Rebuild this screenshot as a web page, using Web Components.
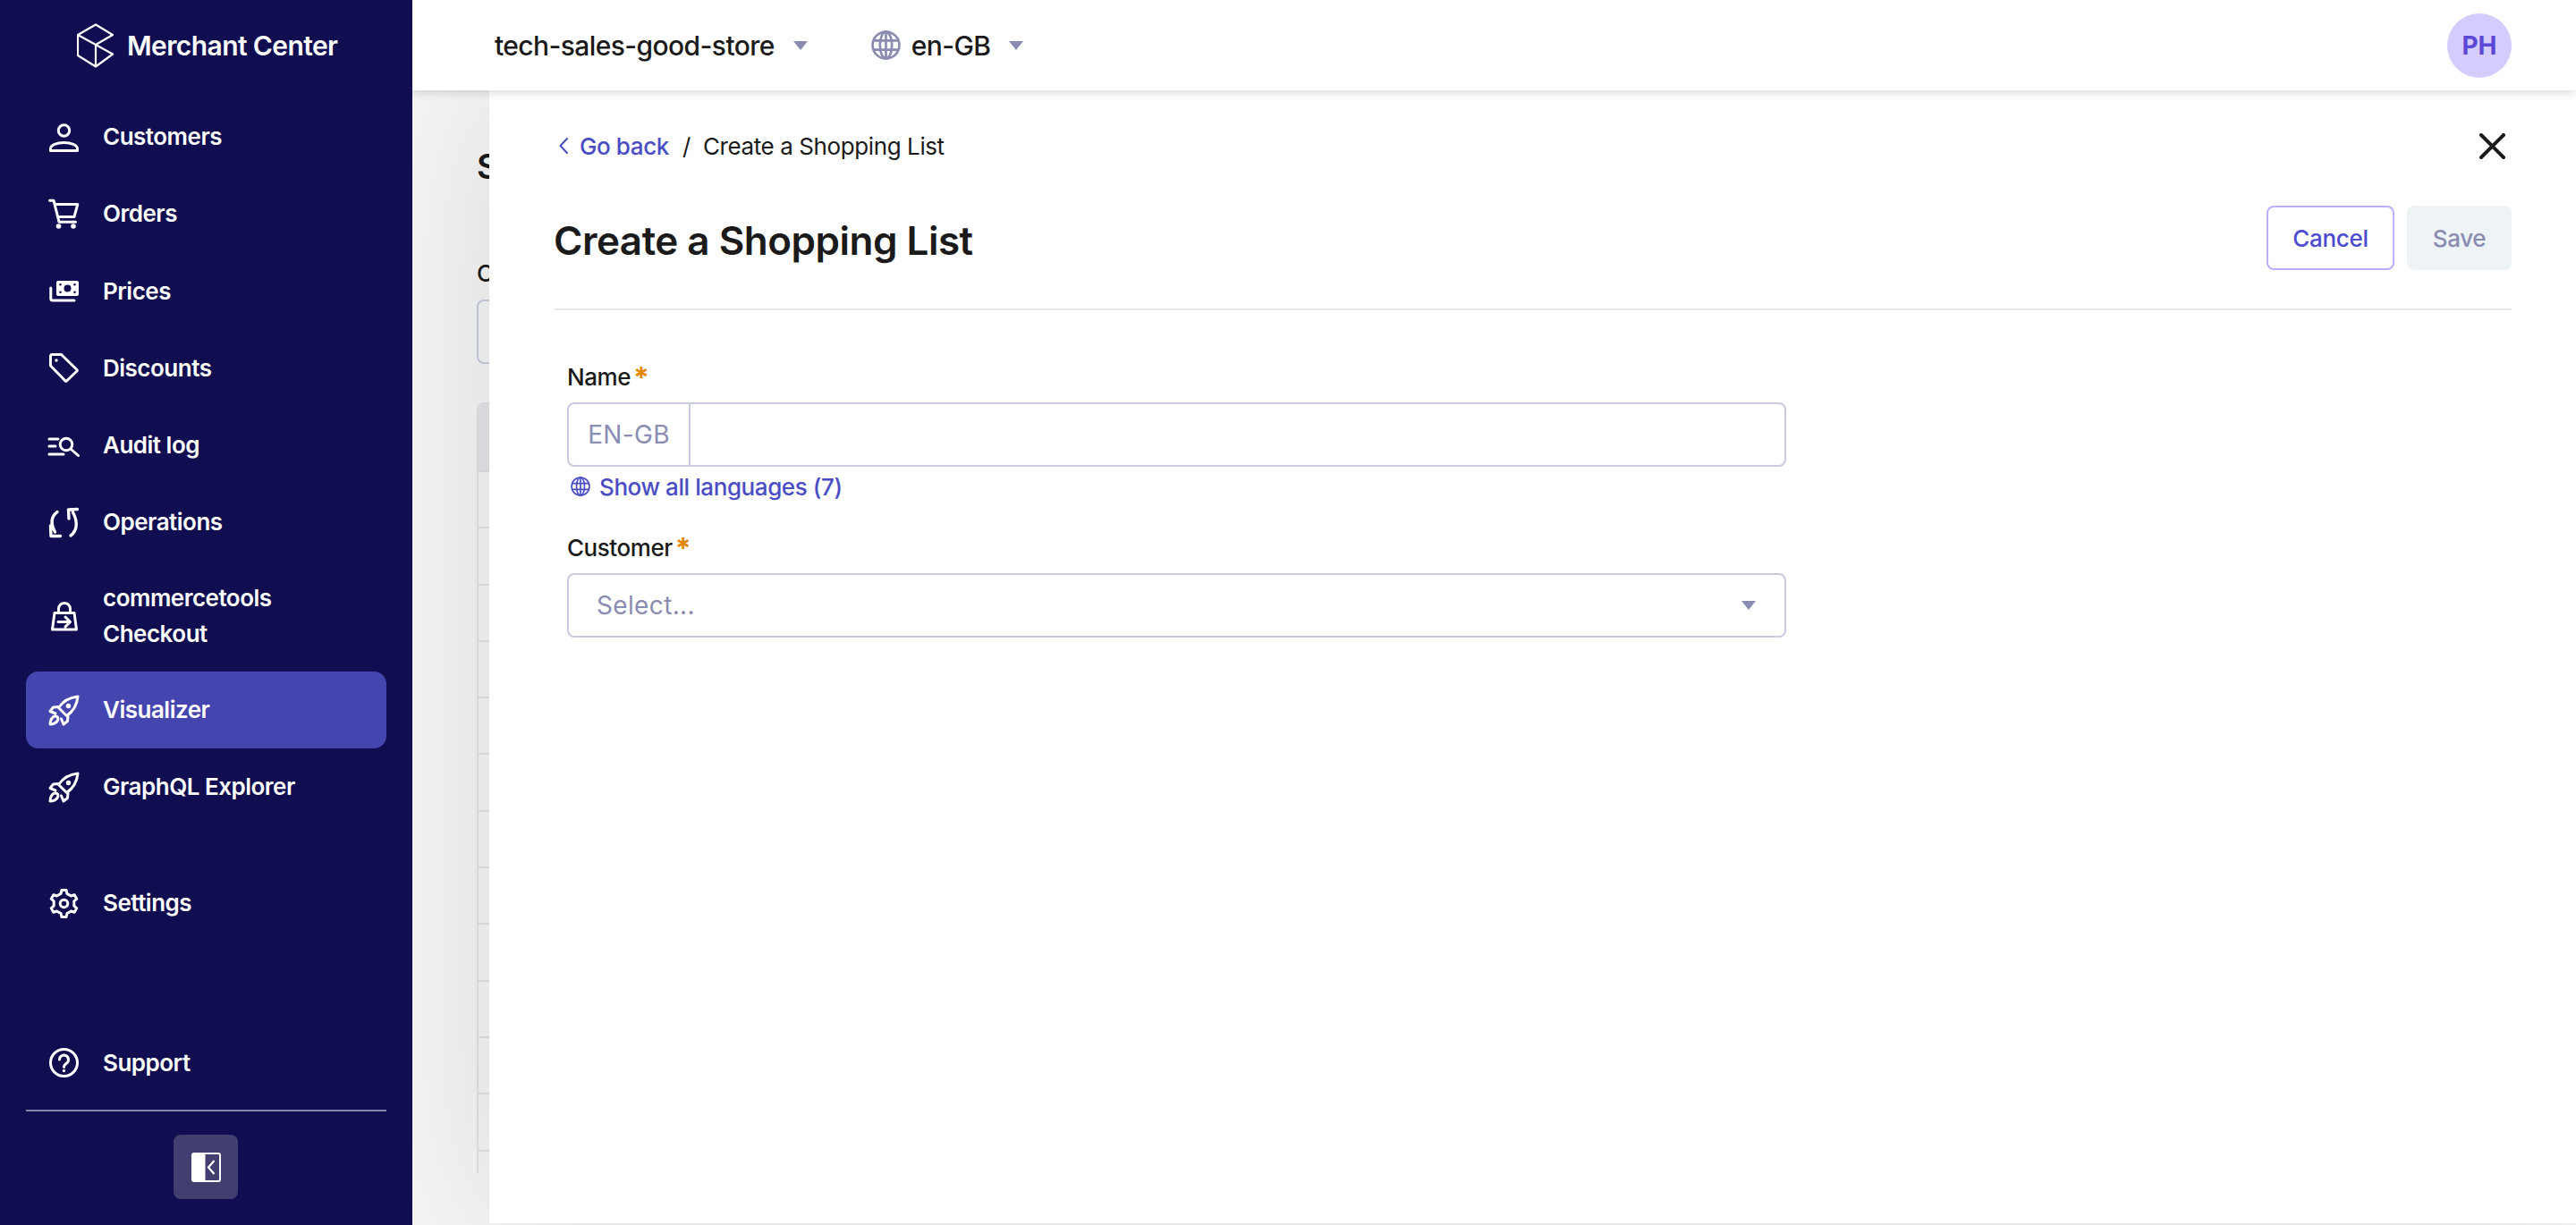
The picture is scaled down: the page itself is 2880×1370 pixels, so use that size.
<!DOCTYPE html>
<html lang="en">
<head>
<meta charset="utf-8">
<title>Merchant Center</title>
<style>
  html, body { margin: 0; padding: 0; height: 100%; overflow: hidden; }
  body { font-family: Inter, "Liberation Sans", sans-serif; color: #1a1a1a; background: #f4f6f6; }
</style>
</head>
<body>
<mc-app>
  <mc-sidebar slot="sidebar">
    <mc-nav-item icon="user">Customers</mc-nav-item>
    <mc-nav-item icon="cart">Orders</mc-nav-item>
    <mc-nav-item icon="money">Prices</mc-nav-item>
    <mc-nav-item icon="tag">Discounts</mc-nav-item>
    <mc-nav-item icon="audit">Audit log</mc-nav-item>
    <mc-nav-item icon="sync">Operations</mc-nav-item>
    <mc-nav-item icon="bag" tall>commercetools Checkout</mc-nav-item>
    <mc-nav-item icon="rocket" active>Visualizer</mc-nav-item>
    <mc-nav-item icon="rocket">GraphQL Explorer</mc-nav-item>
    <mc-nav-item icon="gear" slot="settings">Settings</mc-nav-item>
    <mc-nav-item icon="help" slot="support">Support</mc-nav-item>
  </mc-sidebar>
  <mc-topbar slot="topbar"></mc-topbar>
  <mc-back-page slot="page"></mc-back-page>
  <mc-panel slot="panel">
    <mc-field label="Name">
      <mc-localized-input></mc-localized-input>
    </mc-field>
    <mc-field label="Customer">
      <mc-select placeholder="Select..."></mc-select>
    </mc-field>
  </mc-panel>
</mc-app>

<script>
// icons are all drawn on a 33 unit box
const gear = (() => {
  const pts = [];
  for (let i = 0; i < 6; i++) {
    const a = i * Math.PI / 3 - Math.PI / 2;
    [[-0.3, 11.6], [-0.17, 15.2], [0.17, 15.2], [0.3, 11.6]].forEach(([da, r]) => {
      pts.push((16.5 + r * Math.cos(a + da)).toFixed(2) + ' ' + (16.5 + r * Math.sin(a + da)).toFixed(2));
    });
  }
  return 'M' + pts.join('L') + 'Z';
})();

const ICONS = {
  user: `<circle cx="16.5" cy="9" r="6.2"/><path d="M1.5 31.5v-2.2c0-4.3 7-6.8 15-6.8s15 2.5 15 6.8v2.2z"/>`,
  cart: `<path d="M.5 1.2H5l6 24h18.5M6.5 5.5h25.3L28 19.5H10"/><circle class="f" cx="10.5" cy="30" r="2.8"/><circle class="f" cx="27" cy="30" r="2.8"/>`,
  money: `<path class="f" fill-rule="evenodd" d="M10 5h21a2 2 0 0 1 2 2v13a2 2 0 0 1-2 2H10a2 2 0 0 1-2-2V7a2 2 0 0 1 2-2zm10.5 4.5a4 4 0 1 0 0 8 4 4 0 0 0 0-8zM12.5 8a1.3 1.3 0 1 0 0 2.6 1.3 1.3 0 0 0 0-2.6zm16 0a1.3 1.3 0 1 0 0 2.6 1.3 1.3 0 0 0 0-2.6zm-16 8.4a1.3 1.3 0 1 0 0 2.6 1.3 1.3 0 0 0 0-2.6zm16 0a1.3 1.3 0 1 0 0 2.6 1.3 1.3 0 0 0 0-2.6z"/><path d="M1.8 13v12a2 2 0 0 0 2 2H28"/>`,
  tag: `<path d="M1.5 3a1.5 1.5 0 0 1 1.5-1.5h10.5L31 18.500a1 1 0 0 1 0 1.500L19.500 31a1 1 0 0 1-1.500 0L1.500 14z"/><circle class="f" cx="8" cy="8" r="1.700"/>`,
  audit: `<path d="M0 9h10M0 17h7M0 26h16"/><circle cx="19" cy="15" r="6.800"/><path d="M24 20l8.500 7.500"/>`,
  sync: `<path stroke-width="3.400" d="M9 4.500C2.500 9.500 1 17 6.500 27M1.500 20l.5 11.500h10.500M24 31c7-5 8.500-15 2.500-26M31.500 1.500l-10 .5.500 10"/>`,
  bag: `<path d="M10.500 12V8a6.500 6.500 0 0 1 13 0v4M6 12.500h22l2.500 18.500h-27zM10 22.500h13.500M18 17l5.500 5.500L18 28"/>`,
  rocket: `<path d="M32 1C22.500 2 15.500 6 10.500 13.500l9 9C27 17.500 31 11 32 1zM10.500 12.500l-6 .5-3.500 4.500 6 2.500M21 22.500l-.5 6-4.500 3.500-2.500-6M1 32c-.2-4.500 2.500-9 6-9 3 0 3.700 3 2 5.500-1.800 2.300-5 3.500-8 3.500z"/><circle class="f" cx="21.500" cy="11.500" r="2.700"/>`,
  gear: `<path d="${gear}"/><circle cx="16.500" cy="16.500" r="4.300"/>`,
  help: `<circle cx="16.500" cy="16.500" r="15"/><path d="M11.500 13a5 5 0 1 1 7.800 4.200c-1.800 1.200-2.800 2.200-2.800 4.300"/><circle class="f" cx="16.500" cy="25.500" r="1.700"/>`
};

class McIcon extends HTMLElement {
  connectedCallback() {
    const name = this.getAttribute('name');
    this.attachShadow({ mode: 'open' }).innerHTML = `
      <style>
        :host { display: block; width: 33px; height: 33px; flex: none; }
        svg { display: block; width: 100%; height: 100%; fill: none; stroke: currentColor; stroke-width: 3; stroke-linecap: round; stroke-linejoin: round; overflow: visible; }
        .f { fill: currentColor; stroke: none; }
      </style>
      <svg viewBox="0 0 33 33">${ICONS[name] || ''}</svg>`;
  }
}
customElements.define('mc-icon', McIcon);

class McNavItem extends HTMLElement {
  connectedCallback() {
    this.attachShadow({ mode: 'open' }).innerHTML = `
      <style>
        :host {
          display: flex; align-items: center; gap: 27px;
          height: 86.25px; padding-left: 26px; box-sizing: border-box;
          border-radius: 14px; color: #fff;
          font-size: 26px; font-weight: 600; line-height: 40px; letter-spacing: -.5px;
        }
        :host([tall]) { height: 123.5px; }
        :host([active]) { background: #4545b0; height: 86px; }
        .label { max-width: 250px; }
      </style>
      <mc-icon name="${this.getAttribute('icon')}"></mc-icon>
      <span class="label"><slot></slot></span>`;
  }
}
customElements.define('mc-nav-item', McNavItem);

class McSidebar extends HTMLElement {
  constructor() {
    super();
    this.attachShadow({ mode: 'open' }).innerHTML = `
      <style>
        :host {
          display: flex; flex-direction: column; box-sizing: border-box;
          width: 461px; height: 1370px; padding: 0 29px 29px;
          background: #100d50; color: #fff; position: relative; z-index: 3;
        }
        .logo { display: flex; align-items: center; gap: 14px; height: 110px; padding: 0 0 8px 57px; box-sizing: border-box; font-size: 30px; font-weight: 600; letter-spacing: -.6px; }
        .logo svg { width: 42px; height: 50px; fill: none; stroke: #fff; stroke-width: 2.2; stroke-linejoin: round; }
        .settings { display: block; margin-top: 44px; }
        .grow { flex: 1; }
        hr { margin: 9px 0 26px; border: 0; height: 2px; background: #8885ae; flex: none; }
        .collapse { align-self: center; width: 72px; height: 72px; border-radius: 8px; background: #423f70; display: flex; align-items: center; justify-content: center; margin-left: -1px; }
        .collapse svg { width: 33px; height: 33px; }
      </style>
      <div class="logo">
        <svg viewBox="0 0 42 50"><path d="M21 1.500l19 11.500-19 11-20-11zM1 13v23l20 12.500 19-14-19-10.500v24.500"/></svg>
        <span>Merchant Center</span>
      </div>
      <slot></slot>
      <div class="settings"><slot name="settings"></slot></div>
      <div class="grow"></div>
      <slot name="support"></slot>
      <hr>
      <div class="collapse">
        <svg viewBox="0 0 33 33">
          <rect x="1" y="1" width="31" height="31" rx="2" fill="none" stroke="#fff" stroke-width="2"/>
          <path d="M1 3a2 2 0 0 1 2-2h12.500v31H3a2 2 0 0 1-2-2z" fill="#fff"/>
          <path d="M25.500 9l-6.500 7.500 6.500 7.500" fill="none" stroke="#fff" stroke-width="2.200"/>
        </svg>
      </div>`;
  }
}
customElements.define('mc-sidebar', McSidebar);

class McTopbar extends HTMLElement {
  constructor() {
    super();
    this.attachShadow({ mode: 'open' }).innerHTML = `
      <style>
        :host {
          display: flex; align-items: center; box-sizing: border-box;
          height: 101px; padding: 0 72px 0 92px; background: #fff; flex: none;
          position: relative; z-index: 2; box-shadow: 0 2px 10px rgba(0, 0, 0, .16);
          font-size: 30px; font-weight: 500; color: #1a1a1a; letter-spacing: -.6px;
        }
        .caret { width: 0; height: 0; border: 8.500px solid transparent; border-top: 10px solid #8a8cb2; border-bottom: 0; margin-left: 21px; }
        .globe { width: 33px; height: 33px; margin: 0 12px 0 71px; color: #8a8cb2; --globe-stroke: 2.6; }
        .grow { flex: 1; }
        .avatar { width: 72px; height: 72px; border-radius: 50%; background: #d4ccff; color: #5b48d6; font-weight: 700; font-size: 28px; letter-spacing: 0; display: flex; align-items: center; justify-content: center; }
      </style>
      <span>tech-sales-good-store</span><i class="caret"></i>
      <mc-globe class="globe"></mc-globe>
      <span>en-GB</span><i class="caret"></i>
      <div class="grow"></div>
      <div class="avatar">PH</div>`;
  }
}
customElements.define('mc-topbar', McTopbar);

class McGlobe extends HTMLElement {
  constructor() {
    super();
    this.attachShadow({ mode: 'open' }).innerHTML = `
      <style>
        :host { display: block; flex: none; }
        svg { display: block; width: 100%; height: 100%; fill: none; stroke: currentColor; stroke-width: var(--globe-stroke, 2.4); }
      </style>
      <svg viewBox="0 0 32 32"><circle cx="16" cy="16" r="14.500"/><ellipse cx="16" cy="16" rx="6.500" ry="14.500"/><path d="M16 1.500v29M2.500 11h27M2.500 21h27"/></svg>`;
  }
}
customElements.define('mc-globe', McGlobe);

// what is left showing of the page behind the modal panel
class McBackPage extends HTMLElement {
  constructor() {
    super();
    const rows = Array.from({ length: 12 }, () => '<div class="row"></div>').join('');
    this.attachShadow({ mode: 'open' }).innerHTML = `
      <style>
        :host { display: block; box-sizing: border-box; flex: 1; padding: 0 0 0 72px; overflow: hidden; color: #1a1a1a; }
        h2 { margin: 60px 0 0; height: 50px; font-size: 38px; font-weight: 600; line-height: 50px; }
        .lab { height: 34px; font-size: 26px; font-weight: 500; line-height: 34px; margin-top: 78px; }
        .inp { margin-top: 12px; height: 72px; box-sizing: border-box; border: 2px solid #c8cade; border-radius: 8px; }
        .table { margin-top: 43px; height: 862px; border: 2px solid #dfe1e3; border-bottom: 0; border-radius: 8px 8px 0 0; overflow: hidden; box-sizing: border-box; }
        .head { height: 74px; background: #e3e4e8; border-bottom: 2px solid #dcdee2; }
        .row { height: 61.300px; border-bottom: 2px solid #dfe1e3; }
      </style>
      <h2>S</h2>
      <div class="lab">C</div>
      <div class="inp"></div>
      <div class="table"><div class="head"></div>${rows}</div>`;
  }
}
customElements.define('mc-back-page', McBackPage);

class McButton extends HTMLElement {
  constructor() {
    super();
    this.attachShadow({ mode: 'open' }).innerHTML = `
      <style>
        :host {
          display: flex; align-items: center; justify-content: center; box-sizing: border-box;
          height: 72px; border-radius: 8px; font-size: 26px; font-weight: 500; letter-spacing: -.3px;
          width: 143px; border: 2px solid #b9b1ff; color: #4c4cd0; background: #fff;
        }
        :host([disabled]) { width: 117px; border-color: #eef3f5; background: #eef3f5; color: #8a8cb2; }
      </style>
      <slot></slot>`;
  }
}
customElements.define('mc-button', McButton);

class McPanel extends HTMLElement {
  constructor() {
    super();
    this.attachShadow({ mode: 'open' }).innerHTML = `
      <style>
        :host {
          position: absolute; left: 86px; right: 0; top: 101px; bottom: 2px; z-index: 1;
          display: block; box-sizing: border-box; padding: 44px 72px 0 73px;
          background: #fff; box-shadow: 0 0 170px rgba(0, 0, 0, .11); font-size: 26px;
        }
        .crumbs { display: flex; align-items: center; height: 36px; padding-left: 5px; letter-spacing: -.4px; }
        .back { display: flex; align-items: center; gap: 13px; color: #4a4dc4; font-weight: 500; }
        .back svg { width: 10px; height: 20px; fill: none; stroke: currentColor; stroke-width: 2; stroke-linecap: round; stroke-linejoin: round; }
        .sep { margin: 0 14px 0 15px; }
        .close { margin-left: auto; margin-right: 7px; width: 29px; height: 29px; stroke: #1a1a1a; stroke-width: 4; stroke-linecap: round; fill: none; }
        .head { display: flex; align-items: center; justify-content: space-between; height: 72px; margin-top: 49px; }
        h1 { margin: 6px 0 0 -1px; font-size: 44px; font-weight: 600; letter-spacing: -.5px; }
        .btns { display: flex; gap: 14px; }
        .line { height: 2px; margin-top: 43px; background: #e4e6ea; }
        .form { display: flex; flex-direction: column; width: 1363px; margin: 58px 0 0 14px; }
      </style>
      <div class="crumbs">
        <span class="back"><svg viewBox="0 0 10 20"><path d="M9 2L1.500 10 9 18"/></svg>Go back</span>
        <span class="sep">/</span>
        <span>Create a Shopping List</span>
        <svg class="close" viewBox="0 0 29 29"><path d="M2 2l25 25M27 2L2 27"/></svg>
      </div>
      <div class="head">
        <h1>Create a Shopping List</h1>
        <div class="btns"><mc-button>Cancel</mc-button><mc-button disabled>Save</mc-button></div>
      </div>
      <div class="line"></div>
      <div class="form"><slot></slot></div>`;
  }
}
customElements.define('mc-panel', McPanel);

class McField extends HTMLElement {
  connectedCallback() {
    this.attachShadow({ mode: 'open' }).innerHTML = `
      <style>
        :host { display: block; }
        label { display: flex; height: 34px; margin-bottom: 11px; font-size: 26px; font-weight: 500; line-height: 34px; letter-spacing: -.45px; }
        b { color: #e38800; font-weight: 700; margin: 3px 0 0 3px; font-size: 32px; line-height: 30px; }
      </style>
      <label>${this.getAttribute('label')}<b>*</b></label>
      <slot></slot>`;
  }
}
customElements.define('mc-field', McField);

class McLocalizedInput extends HTMLElement {
  constructor() {
    super();
    this.attachShadow({ mode: 'open' }).innerHTML = `
      <style>
        :host { display: block; margin-bottom: 35px; }
        .box { display: flex; height: 72px; box-sizing: border-box; border: 2px solid #c9cbdf; border-radius: 8px; }
        .lang { display: flex; align-items: center; justify-content: center; width: 134px; border-right: 2px solid #c9cbdf; color: #8a8cb2; font-size: 28px; letter-spacing: .3px; }
        .more { display: flex; align-items: center; gap: 10px; height: 34px; margin-top: 5px; padding-left: 4px; color: #4a4dc4; font-size: 26px; font-weight: 500; letter-spacing: -.42px; }
        mc-globe { width: 22px; height: 22px; }
      </style>
      <div class="box"><div class="lang">EN-GB</div></div>
      <div class="more"><mc-globe></mc-globe><span>Show all languages (7)</span></div>`;
  }
}
customElements.define('mc-localized-input', McLocalizedInput);

class McSelect extends HTMLElement {
  connectedCallback() {
    this.attachShadow({ mode: 'open' }).innerHTML = `
      <style>
        :host {
          display: flex; align-items: center; justify-content: space-between; box-sizing: border-box;
          height: 72px; padding: 0 32px 0 31px; border: 2px solid #c9cbdf; border-radius: 8px;
          color: #8a8cb2; font-size: 28px; letter-spacing: .35px;
        }
        i { width: 0; height: 0; border: 8.500px solid transparent; border-top: 10px solid #8a8cb2; border-bottom: 0; }
      </style>
      <span>${this.getAttribute('placeholder')}</span><i></i>`;
  }
}
customElements.define('mc-select', McSelect);

class McApp extends HTMLElement {
  constructor() {
    super();
    this.attachShadow({ mode: 'open' }).innerHTML = `
      <style>
        :host { display: flex; width: 2880px; height: 1370px; overflow: hidden; }
        .main { position: relative; flex: 1; display: flex; flex-direction: column; min-width: 0; }
      </style>
      <slot name="sidebar"></slot>
      <div class="main">
        <slot name="topbar"></slot>
        <slot name="page"></slot>
        <slot name="panel"></slot>
      </div>`;
  }
}
customElements.define('mc-app', McApp);
</script>
</body>
</html>
